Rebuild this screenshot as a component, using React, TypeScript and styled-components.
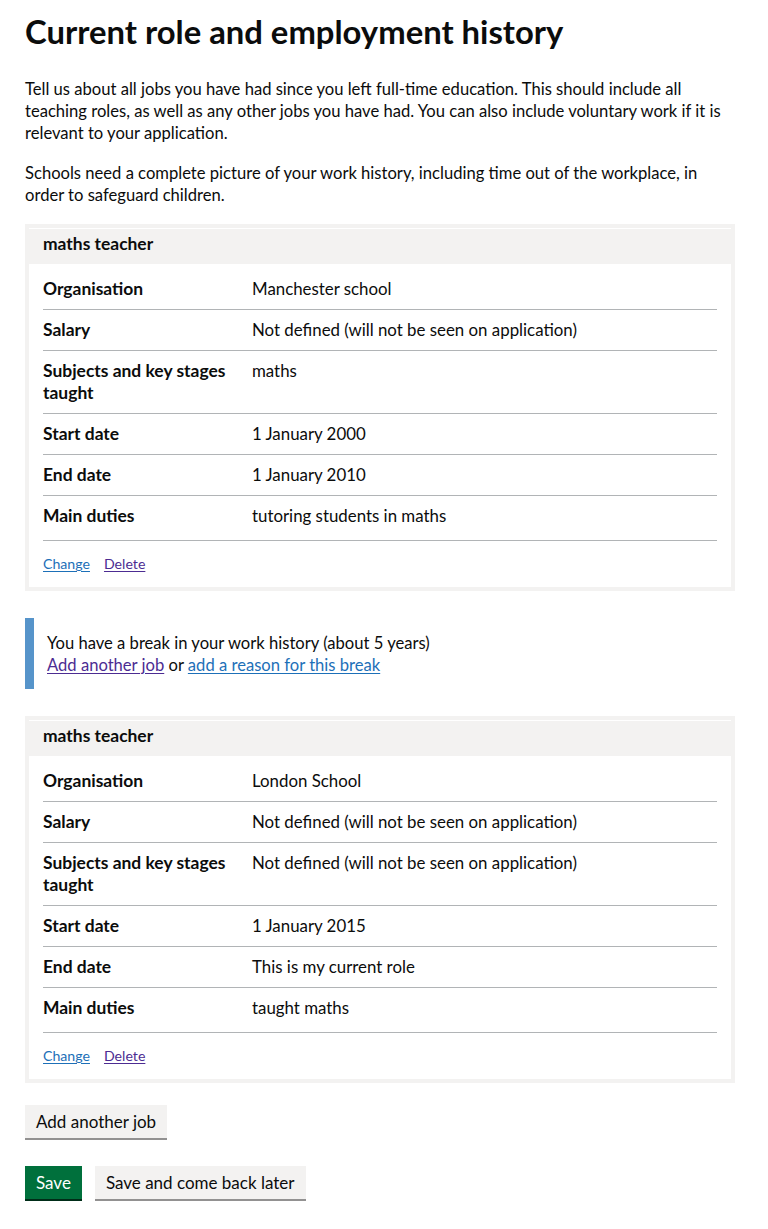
import React from "react";
import styled, { createGlobalStyle } from "styled-components";

const GlobalStyle = createGlobalStyle`
  html, body {
    margin: 0;
    padding: 0;
    background: #ffffff;
  }
  body {
    font-family: Lato, "Liberation Sans", Arial, sans-serif;
    color: #0b0c0c;
    -webkit-font-smoothing: antialiased;
  }
`;

const Page = styled.main`
  width: 710px;
  padding: 12px 0 30px 25px;
`;

const Title = styled.h1`
  margin: 0 0 26px;
  font-size: 32.8px;
  line-height: 40px;
  font-weight: 700;
`;

const Body = styled.p`
  margin: 0 0 18px;
  max-width: 700px;
  font-size: 16.6px;
  line-height: 22px;
`;

const Card = styled.section<{ $gap?: number }>`
  border: 4px solid #f3f2f1;
  margin: 0 0 ${(p) => p.$gap ?? 27}px;
  background: #ffffff;
`;

const CardHeader = styled.header`
  border-top: 1px solid #ffffff;
  background: #f3f2f1;
  padding: 4px 14px 9px;
`;

const CardTitle = styled.h2`
  margin: 0;
  font-size: 17.45px;
  line-height: 22px;
  font-weight: 700;
`;

const CardBody = styled.div`
  padding: 5px 14px 0;
`;

const SummaryList = styled.dl`
  margin: 0;
`;

const Row = styled.div<{ $last?: boolean }>`
  display: grid;
  grid-template-columns: 209px 1fr;
  padding: ${(p) => (p.$last ? "9px 0 13px" : "9px 0")};
  border-bottom: 1px solid #b1b4b6;
`;

const Key = styled.dt`
  margin: 0;
  padding-right: 19px;
  font-size: 17.45px;
  line-height: 22px;
  font-weight: 700;
`;

const Value = styled.dd`
  margin: 0;
  font-size: 16.85px;
  line-height: 22px;
`;

const Actions = styled.div`
  display: flex;
  gap: 14px;
  padding: 13px 0;
`;

const Link = styled.a<{ $visited?: boolean; $small?: boolean }>`
  color: ${(p) => (p.$visited ? "#4c2c92" : "#1d70b8")};
  font-size: ${(p) => (p.$small ? "14.15px" : "inherit")};
  line-height: ${(p) => (p.$small ? "20px" : "inherit")};
  text-decoration: underline;
  text-decoration-thickness: 1px;
  text-underline-offset: 2px;
  cursor: pointer;
`;

const Inset = styled.div`
  border-left: 9px solid #5694ca;
  padding: 14px 13px 13px;
  margin: 0 0 27px;
  font-size: 16.6px;
  line-height: 22px;
`;

const Button = styled.button<{ $primary?: boolean }>`
  display: inline-block;
  border: 0;
  border-radius: 0;
  margin: 0;
  padding: 6px 11px 5px;
  font-family: inherit;
  font-size: 17px;
  line-height: 22px;
  background: ${(p) => (p.$primary ? "#00703c" : "#f3f2f1")};
  color: ${(p) => (p.$primary ? "#ffffff" : "#0b0c0c")};
  box-shadow: 0 2px 0 ${(p) => (p.$primary ? "#002d18" : "#929191")};
  cursor: pointer;
`;

const AddRow = styled.div`
  margin: 0 0 28px;
`;

const ButtonGroup = styled.div`
  display: flex;
  gap: 13px;
  align-items: flex-start;
`;

type Job = {
  title: string;
  rows: [string, string][];
};

const jobs: Job[] = [
  {
    title: "maths teacher",
    rows: [
      ["Organisation", "Manchester school"],
      ["Salary", "Not defined (will not be seen on application)"],
      ["Subjects and key stages taught", "maths"],
      ["Start date", "1 January 2000"],
      ["End date", "1 January 2010"],
      ["Main duties", "tutoring students in maths"],
    ],
  },
  {
    title: "maths teacher",
    rows: [
      ["Organisation", "London School"],
      ["Salary", "Not defined (will not be seen on application)"],
      ["Subjects and key stages taught", "Not defined (will not be seen on application)"],
      ["Start date", "1 January 2015"],
      ["End date", "This is my current role"],
      ["Main duties", "taught maths"],
    ],
  },
];

function JobCard({ job, gap }: { job: Job; gap?: number }) {
  return (
    <Card $gap={gap}>
      <CardHeader>
        <CardTitle>{job.title}</CardTitle>
      </CardHeader>
      <CardBody>
        <SummaryList>
          {job.rows.map(([k, v], i) => (
            <Row key={k} $last={i === job.rows.length - 1}>
              <Key>{k}</Key>
              <Value>{v}</Value>
            </Row>
          ))}
        </SummaryList>
        <Actions>
          <Link $small>Change</Link>
          <Link $small $visited>
            Delete
          </Link>
        </Actions>
      </CardBody>
    </Card>
  );
}

export default function App() {
  return (
    <>
      <GlobalStyle />
      <Page>
        <Title>Current role and employment history</Title>
        <Body>
          Tell us about all jobs you have had since you left full-time education. This should include all
          teaching roles, as well as any other jobs you have had. You can also include voluntary work if it is
          relevant to your application.
        </Body>
        <Body>
          Schools need a complete picture of your work history, including time out of the workplace, in order to
          safeguard children.
        </Body>
        <JobCard job={jobs[0]} />
        <Inset>
          You have a break in your work history (about 5 years)
          <br />
          <Link $visited>Add another job</Link> or <Link>add a reason for this break</Link>
        </Inset>
        <JobCard job={jobs[1]} gap={22} />
        <AddRow>
          <Button>Add another job</Button>
        </AddRow>
        <ButtonGroup>
          <Button $primary>Save</Button>
          <Button>Save and come back later</Button>
        </ButtonGroup>
      </Page>
    </>
  );
}
